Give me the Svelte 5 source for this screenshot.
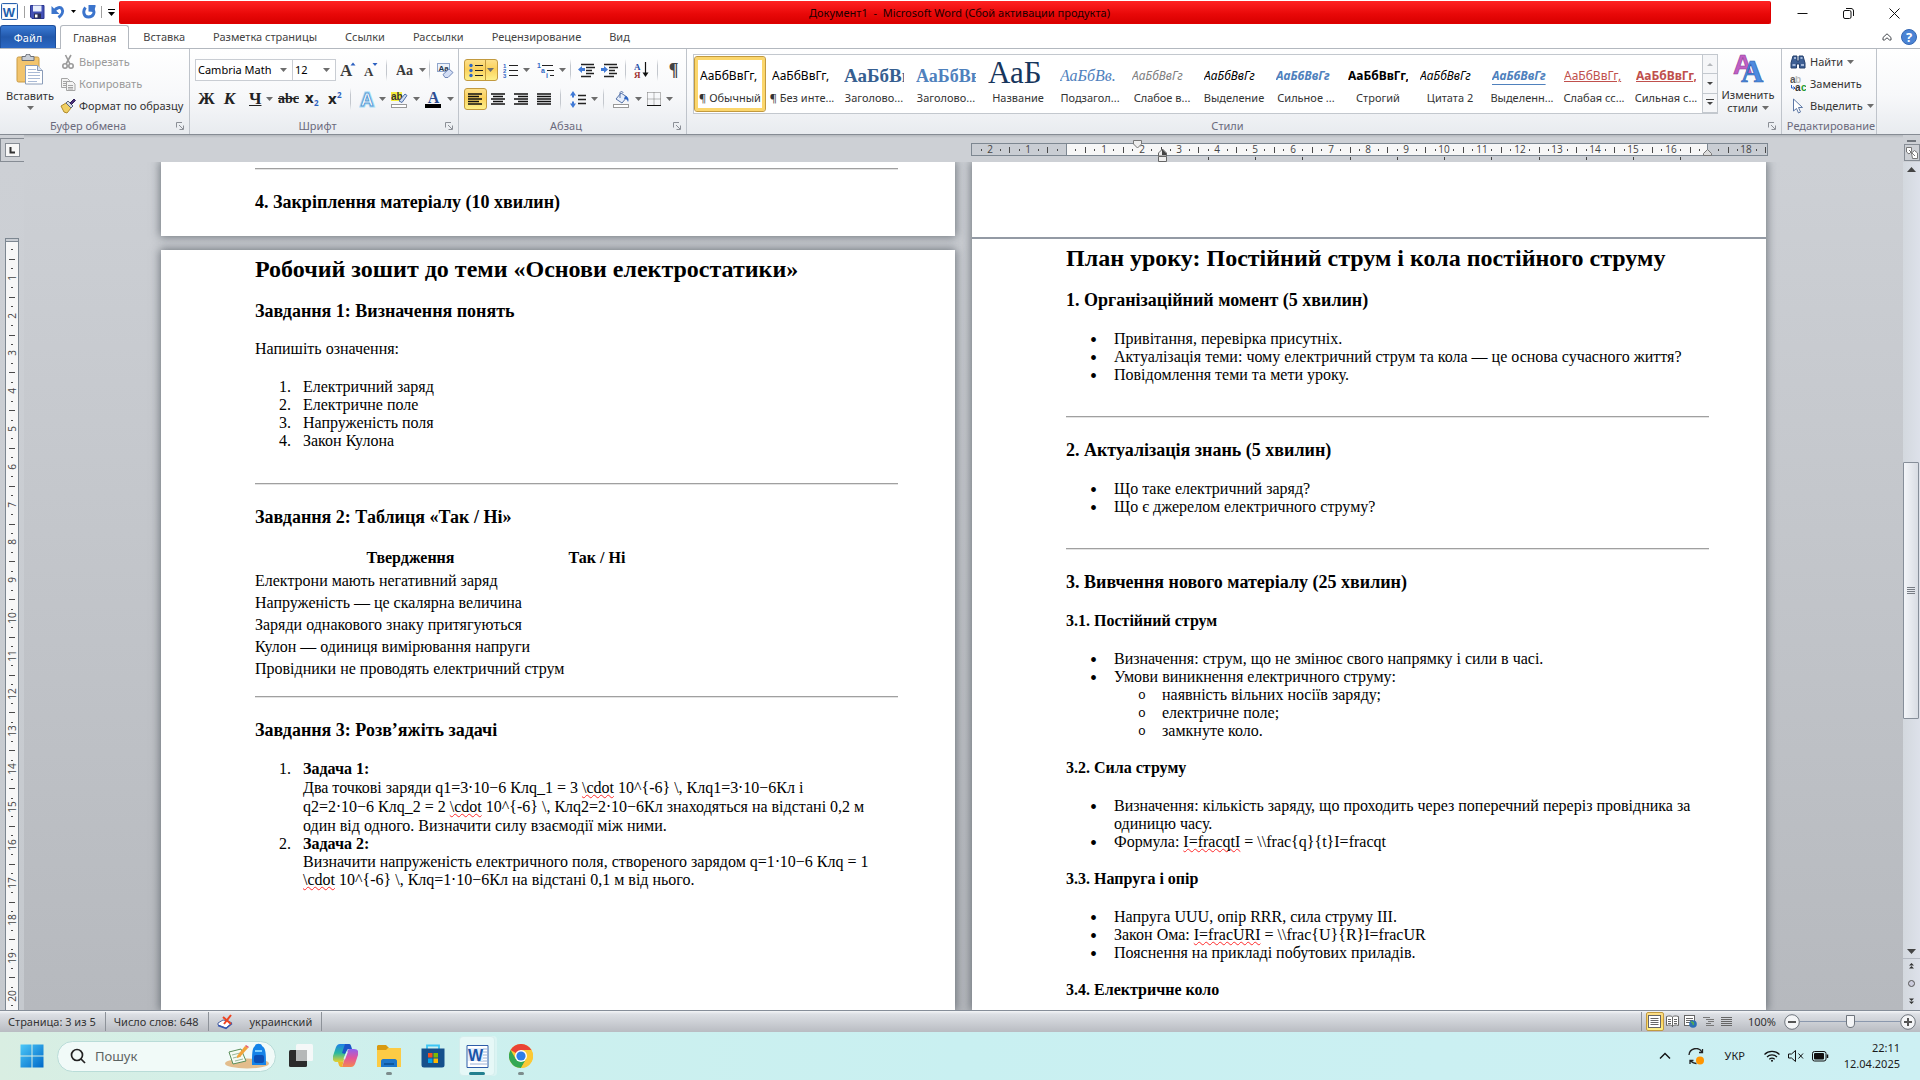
<script>
  const tabs = ['Вставка', 'Разметка страницы', 'Ссылки', 'Рассылки', 'Рецензирование', 'Вид'];
  const styles = [
    { name: '¶ Обычный', sample: 'АаБбВвГг,', kind: 'plain', on: true },
    { name: '¶ Без инте...', sample: 'АаБбВвГг,', kind: 'plain' },
    { name: 'Заголово...', sample: 'АаБбВв', kind: 'head1' },
    { name: 'Заголово...', sample: 'АаБбВв', kind: 'head2' },
    { name: 'Название', sample: 'АаБ', kind: 'title' },
    { name: 'Подзагол...', sample: 'АаБбВв.', kind: 'subtitle' },
    { name: 'Слабое в...', sample: 'АаБбВвГг', kind: 'subtle' },
    { name: 'Выделение', sample: 'АаБбВвГг', kind: 'em' },
    { name: 'Сильное ...', sample: 'АаБбВвГг', kind: 'intense' },
    { name: 'Строгий', sample: 'АаБбВвГг,', kind: 'strong' },
    { name: 'Цитата 2', sample: 'АаБбВвГг', kind: 'em' },
    { name: 'Выделенн...', sample: 'АаБбВвГг', kind: 'quote' },
    { name: 'Слабая сс...', sample: 'АаБбВвГг,', kind: 'ref' },
    { name: 'Сильная с...', sample: 'АаБбВвГг,', kind: 'refbold' }
  ];
  const statements = [
    'Електрони мають негативний заряд',
    'Напруженість — це скалярна величина',
    'Заряди однакового знаку притягуються',
    'Кулон — одиниця вимірювання напруги',
    'Провідники не проводять електричний струм'
  ];

  // Ruler geometry: one centimetre at 100% zoom
  const CM = 37.8;
  const ORIGIN = 95;
  const hNumbers = [];
  const hTicks = [];
  for (let q = -10; q <= 74; q++) {
    const x = Math.round(ORIGIN + (q * CM) / 4);
    if (x < 3 || x > 794) continue;
    const k = q / 4;
    if (q % 4 === 0) {
      if (k !== 0 && k !== 17) hNumbers.push({ x, n: Math.abs(k) });
    } else hTicks.push({ x, half: q % 2 === 0 });
  }
  const tabStops = Array.from({ length: 11 }, (_, i) => Math.round(ORIGIN + (i + 3) * CM * 1.25));
  const vNumbers = [];
  const vTicks = [];
  for (let q = 1; q <= 110; q++) {
    const y = Math.round(2 + (q * CM) / 4);
    if (q % 4 === 0) vNumbers.push({ y, n: q / 4 });
    else vTicks.push({ y, half: q % 2 === 0 });
  }
  let zoom = $state(50);
</script>

{#snippet arrow()}
  <svg class="arrow" width="7" height="4" viewBox="0 0 7 4"><path d="M0 0h7L3.5 4z" fill="#6d6d6d" /></svg>
{/snippet}

{#snippet launcher(label)}
  <button class="launcher" aria-label={label}>
    <svg width="8" height="8" viewBox="0 0 8 8" fill="none" stroke="#8b8f96"><path d="M.5 5.500V.5H6M3 3l4 4M7.500 3.500v4h-4" /></svg>
  </button>
{/snippet}

<div class="app">
  <header class="titlebar">
    <div class="quick">
      <svg width="17" height="17" viewBox="0 0 17 17"><rect x=".5" y=".5" width="16" height="16" rx="1" fill="#e9f1fb" stroke="#2b62ae" /><rect x="2" y="2" width="13" height="13" fill="#fff" /><text x="8" y="13.500" font-size="13" font-weight="bold" font-family="Liberation Sans" fill="#1f5fae" text-anchor="middle">W</text></svg>
      <i class="bar"></i>
      <button class="qbtn" aria-label="Сохранить"><svg width="15" height="15" viewBox="0 0 15 15"><path d="M.5 1.500h13.500v13H2L.5 13z" fill="#4351b5" stroke="#2b3690" /><rect x="3" y="1.500" width="8.500" height="6" fill="#e8eefb" /><rect x="4" y="9.500" width="7" height="5" fill="#2a2f55" /><rect x="5" y="10.500" width="2.500" height="3" fill="#fff" /></svg></button>
      <button class="qbtn" aria-label="Отменить"><svg width="14" height="14" viewBox="0 0 14 14" fill="none"><path d="M3 6C5.500 2.500 9.500 1.500 11 4c1.500 2.500 0 6-3.500 8.500" stroke="#3b74cc" stroke-width="3" /><path d="M.5 1v8h8z" fill="#3b74cc" /></svg></button>
      <svg width="5" height="3" viewBox="0 0 5 3"><path d="M0 0h5L2.500 3z" fill="#000" /></svg>
      <button class="qbtn" aria-label="Повторить"><svg width="14" height="14" viewBox="0 0 14 14" fill="none"><path d="M3.500 2.500C.5 6 1.500 12 6.500 12S13.500 7 10.500 4" stroke="#3b74cc" stroke-width="3" /><path d="M13.500 0v1.500L12 7 6.500 6.500V0z" fill="#3b74cc" /></svg></button>
      <i class="bar"></i>
      <svg width="7" height="8" viewBox="0 0 7 8"><path d="M0 1.500h7" stroke="#000" /><path d="M0 4h7L3.500 8z" fill="#000" /></svg>
    </div>
    <div class="caption">Документ1&nbsp; -&nbsp; Microsoft Word (Сбой активации продукта)</div>
    <div class="winbtns">
      <button aria-label="Свернуть"><svg width="11" height="11" viewBox="0 0 11 11"><path d="M.5 5.500h10" stroke="#111" /></svg></button>
      <button aria-label="Восстановить"><svg width="11" height="11" viewBox="0 0 11 11" fill="none" stroke="#111"><rect x=".5" y="2.500" width="7.500" height="8" rx="1.500" /><path d="M3 .5h5c1.500 0 2.500 1 2.500 2.500v5" /></svg></button>
      <button aria-label="Закрыть"><svg width="11" height="11" viewBox="0 0 11 11"><path d="M.5.5l10 10M10.500.5l-10 10" stroke="#111" /></svg></button>
    </div>
  </header>

  <nav class="tabs">
    <button class="file">Файл</button>
    <button class="tab active">Главная</button>
    {#each tabs as t}<button class="tab">{t}</button>{/each}
    <span class="grow"></span>
    <button class="mini" aria-label="Свернуть ленту"><svg width="10" height="8" viewBox="0 0 10 8" fill="none" stroke="#44484e"><path d="M1 4.500L5 .8l4 3.700v2.500H7.500L5 4.800 2.500 7H1z" /></svg></button>
    <button class="mini" aria-label="Справка"><svg width="16" height="16" viewBox="0 0 16 16"><circle cx="8" cy="8" r="7.500" fill="#4a83d4" stroke="#3467b3" /><text x="8" y="13" font-size="13" font-weight="bold" font-family="Open Sans" fill="#fff" text-anchor="middle">?</text></svg></button>
  </nav>

  <section class="ribbon">
    <div class="group clip">
      <div class="body">
        <button class="big">
          <svg width="28" height="31" viewBox="0 0 28 31"><rect x="1" y="3" width="22" height="25" rx="1.500" fill="#f2c46d" stroke="#c99b45" /><path d="M6 2.500h3.500a2.500 2.500 0 015 0H18v4H6z" fill="#c9ced6" stroke="#6b7079" /><path d="M9.500 11.500h12l5 5v13.500h-17z" fill="#fff" stroke="#8a9cb8" /><path d="M21.500 11.500v5h5" fill="#dbe4f2" stroke="#8a9cb8" /><path d="M12 15.500h8M12 18.500h12M12 21.500h12M12 24.500h12M12 27.500h9" stroke="#a9bad6" /></svg>
          <span>Вставить</span>{@render arrow()}
        </button>
        <div class="stack">
          <button class="small off"><svg width="16" height="16" viewBox="0 0 16 16" fill="none" stroke="#9a9a9a" stroke-width="1.600"><path d="M5.500 1l4.500 9M11 1L6 10" /><circle cx="5" cy="12" r="2.200" /><circle cx="11" cy="12" r="2.200" /></svg>Вырезать</button>
          <button class="small off"><svg width="16" height="16" viewBox="0 0 16 16" fill="#f3f3f3" stroke="#a4a4a4"><path d="M1.500 2.500h6l2 2v7h-8z" /><path d="M3 5.500h4M3 7.500h5M3 9.500h5" /><path d="M6.500 5.500h6l2.500 2.500v6.500H6.500z" /><path d="M8 9.500h5M8 11.500h5M8 13h5" /></svg>Копировать</button>
          <button class="small"><svg width="16" height="16" viewBox="0 0 16 16"><path d="M1 8l5-3 5 5-4 5-3-1z" fill="#f0cf62" stroke="#b08a2a" /><path d="M6 5l5 5 2-2-5-5z" fill="#d5dbe6" stroke="#5d6980" /><path d="M10 5l4-4 1.500 1.500-4 4z" fill="#4a2f7a" stroke="#30205a" /></svg>Формат по образцу</button>
        </div>
      </div>
      <footer><span>Буфер обмена</span>{@render launcher('Буфер обмена')}</footer>
    </div>

    <div class="group font">
      <div class="rows">
        <div class="row">
          <label class="combo name"><select aria-label="Шрифт"><option>Cambria Math</option></select>{@render arrow()}</label>
          <label class="combo size"><select aria-label="Размер шрифта"><option>12</option></select>{@render arrow()}</label>
          <button class="ib" aria-label="Увеличить размер"><svg width="16" height="16" viewBox="0 0 16 16"><text x="0" y="14" font-size="17" font-weight="bold" font-family="Liberation Serif" fill="#3a3a3a">A</text><path d="M10.500 3.500L13 .5l2.500 3z" fill="#2b5fc0" /></svg></button>
          <button class="ib" aria-label="Уменьшить размер"><svg width="16" height="16" viewBox="0 0 16 16"><text x="1" y="14" font-size="13" font-weight="bold" font-family="Liberation Serif" fill="#3a3a3a">A</text><path d="M9.500 1h5L12 4z" fill="#2b5fc0" /></svg></button>
          <i class="sep"></i>
          <button class="ib split" aria-label="Регистр"><svg width="18" height="16" viewBox="0 0 18 16"><text x="0" y="13" font-size="14" font-weight="bold" font-family="Liberation Serif" fill="#3a3a3a">Aa</text></svg>{@render arrow()}</button>
          <i class="sep"></i>
          <button class="ib" aria-label="Очистить формат"><svg width="17" height="17" viewBox="0 0 17 17"><rect x=".5" y="1.500" width="12" height="8" fill="#eef3fb" stroke="#8fa5cc" /><text x="6.500" y="9" font-size="8" font-weight="bold" font-family="Liberation Sans" fill="#24364f" text-anchor="middle">Aa</text><path d="M6 12.500l6-5.500 4 3.500-5 5H8z" fill="#d3def5" stroke="#7187b8" /></svg></button>
        </div>
        <div class="row">
          <button class="ib serif"><b>Ж</b></button>
          <button class="ib serif"><b><em>К</em></b></button>
          <button class="ib split serif"><b class="und">Ч</b>{@render arrow()}</button>
          <button class="ib serif small-letters"><b><s>abc</s></b></button>
          <button class="ib" aria-label="Подстрочный"><svg width="15" height="16" viewBox="0 0 15 16"><text x="1" y="12" font-size="15" font-weight="bold" font-family="Open Sans" fill="#222">x</text><text x="10" y="15" font-size="8" font-weight="bold" font-family="Open Sans" fill="#2b5fc0">2</text></svg></button>
          <button class="ib" aria-label="Надстрочный"><svg width="15" height="16" viewBox="0 0 15 16"><text x="1" y="13" font-size="15" font-weight="bold" font-family="Open Sans" fill="#222">x</text><text x="10" y="7" font-size="8" font-weight="bold" font-family="Open Sans" fill="#2b5fc0">2</text></svg></button>
          <i class="sep"></i>
          <button class="ib split narrow" aria-label="Текстовые эффекты"><svg width="17" height="17" viewBox="0 0 17 17"><text x="8" y="14.500" font-size="18" font-family="Liberation Sans" font-weight="bold" fill="#fff" stroke="#a7dcf6" stroke-width="3" text-anchor="middle">A</text><text x="8" y="14.500" font-size="18" font-family="Liberation Sans" font-weight="bold" fill="#fff" stroke="#5b9bd5" stroke-width="1" text-anchor="middle">A</text></svg>{@render arrow()}</button>
          <button class="ib split" aria-label="Цвет выделения"><svg width="17" height="17" viewBox="0 0 17 17"><rect x="0" y="1" width="11" height="9" fill="#f5ee3c" /><text x="0" y="9" font-size="10" font-weight="bold" font-family="Liberation Sans" fill="#333">ab</text><path d="M8 10l6-7 2 1.500-5 7z" fill="#cfdcf2" stroke="#4c6ea8" /><rect x=".5" y="13.500" width="15" height="3" fill="#fff" stroke="#999" /></svg>{@render arrow()}</button>
          <button class="ib split" aria-label="Цвет текста"><svg width="17" height="17" viewBox="0 0 17 17"><text x="8.500" y="12" font-size="16" font-weight="bold" font-family="Liberation Serif" fill="#2c4d92" text-anchor="middle">A</text><rect x="0" y="13" width="16" height="4" fill="#000" /></svg>{@render arrow()}</button>
        </div>
      </div>
      <footer><span>Шрифт</span>{@render launcher('Шрифт')}</footer>
    </div>

    <div class="group para">
      <div class="rows">
        <div class="row">
          <button class="ib split on" aria-label="Маркеры"><svg width="15" height="15" viewBox="0 0 15 15"><g fill="#2f66c4"><circle cx="2" cy="2.500" r="1.700" /><circle cx="2" cy="7.500" r="1.700" /><circle cx="2" cy="12.500" r="1.700" /></g><path d="M6 2.500h8M6 7.500h8M6 12.500h8" stroke="#222" /></svg><i class="divide"></i>{@render arrow()}</button>
          <button class="ib split" aria-label="Нумерация"><svg width="15" height="15" viewBox="0 0 15 15"><g font-size="6" font-weight="bold" font-family="Liberation Sans" fill="#2f66c4"><text x="0" y="4.500">1</text><text x="0" y="9.500">2</text><text x="0" y="14.500">3</text></g><path d="M6 2.500h9M6 7.500h9M6 12.500h9" stroke="#222" /></svg>{@render arrow()}</button>
          <button class="ib split" aria-label="Многоуровневый список"><svg width="17" height="15" viewBox="0 0 17 15"><g font-size="7" font-weight="bold" font-family="Liberation Sans" fill="#2f66c4"><text x="0" y="5">1</text><text x="4" y="9.500">a</text><text x="9" y="15">i</text></g><path d="M5 2.500h11M10 7.500h7M13 12.500h4" stroke="#222" /></svg>{@render arrow()}</button>
          <i class="sep"></i>
          <button class="ib" aria-label="Уменьшить отступ"><svg width="17" height="15" viewBox="0 0 17 15"><path d="M3 1.500h13M8 4.500h9M8 7.500h6M8 10.500h8M3 13.500h10" stroke="#222" stroke-width="1.500" /><path d="M0 6.500L4 3v2h3v3H4v2z" fill="#3f79d6" /></svg></button>
          <button class="ib" aria-label="Увеличить отступ"><svg width="17" height="15" viewBox="0 0 17 15"><path d="M3 1.500h13M8 4.500h9M8 7.500h6M8 10.500h8M3 13.500h10" stroke="#222" stroke-width="1.500" /><path d="M7 6.500L3 3v2H0v3h3v2z" fill="#3f79d6" /></svg></button>
          <i class="sep"></i>
          <button class="ib" aria-label="Сортировка"><svg width="15" height="16" viewBox="0 0 15 16"><text x="0" y="7.500" font-size="9" font-weight="bold" font-family="Liberation Serif" fill="#1f4fa8">А</text><text x="0" y="15.500" font-size="9" font-weight="bold" font-family="Liberation Serif" fill="#a03030">Я</text><path d="M11.500 0v13" stroke="#111" stroke-width="1.200" /><path d="M8.500 10.500h6l-3 4.500z" fill="#111" /></svg></button>
          <i class="sep"></i>
          <button class="ib mark">¶</button>
        </div>
        <div class="row">
          <button class="ib on" aria-label="По левому краю"><svg width="15" height="13" viewBox="0 0 15 13"><path d="M0 1h14M0 3.500h11M0 6h14M0 8.500h11M0 11h14" stroke="#111" stroke-width="1.400" /></svg></button>
          <button class="ib" aria-label="По центру"><svg width="15" height="13" viewBox="0 0 15 13"><path d="M0 1h14M2 3.500h10M0 6h14M2 8.500h10M0 11h14" stroke="#111" stroke-width="1.400" /></svg></button>
          <button class="ib" aria-label="По правому краю"><svg width="15" height="13" viewBox="0 0 15 13"><path d="M0 1h14M4 3.500h10M0 6h14M4 8.500h10M0 11h14" stroke="#111" stroke-width="1.400" /></svg></button>
          <button class="ib" aria-label="По ширине"><svg width="15" height="13" viewBox="0 0 15 13"><path d="M0 1h14M0 3.500h14M0 6h14M0 8.500h14M0 11h14" stroke="#111" stroke-width="1.400" /></svg></button>
          <i class="sep"></i>
          <button class="ib split" aria-label="Интервал"><svg width="16" height="17" viewBox="0 0 16 17"><path d="M3 0l3 4.500H4v2H2v-2H0zM3 17l3-4.500H4v-2H2v2H0z" fill="#3f79d6" /><path d="M8 4.500h8M8 8.500h8M8 12.500h8" stroke="#222" stroke-width="1.300" /></svg>{@render arrow()}</button>
          <i class="sep"></i>
          <button class="ib split" aria-label="Заливка"><svg width="17" height="17" viewBox="0 0 17 17"><path d="M3 8l5-6 6 4-5 6z" fill="#e6eefb" stroke="#5673a8" /><path d="M7 7V2c0-2 3-2 3 0" fill="none" stroke="#5673a8" /><path d="M12 5c4 1 4 4 3 6-1-3-2-3-4-3z" fill="#2f66c4" /><rect x=".5" y="13.500" width="15" height="3" fill="#fff" stroke="#999" /></svg>{@render arrow()}</button>
          <button class="ib split" aria-label="Границы"><svg width="14" height="14" viewBox="0 0 14 14" fill="none"><path d="M.5.5h13v13M.5.5v13M7 .5v13M.5 7h13" stroke="#777" stroke-dasharray="1 1" /><path d="M0 13.500h14" stroke="#111" /></svg>{@render arrow()}</button>
        </div>
      </div>
      <footer><span>Абзац</span>{@render launcher('Абзац')}</footer>
    </div>

    <div class="group gallery-group">
      <div class="body">
        <div class="gallery">
          {#each styles as s}
            <button class="tile" class:on={s.on}>
              <span class="sample {s.kind}">{s.sample}</span>
              <span class="tname">{s.name}</span>
            </button>
          {/each}
          <div class="gscroll">
            <button aria-label="Вверх"><svg width="6" height="3" viewBox="0 0 6 3"><path d="M0 3h6L3 0z" fill="#b5b8bc" /></svg></button>
            <button aria-label="Вниз"><svg width="6" height="3" viewBox="0 0 6 3"><path d="M0 0h6L3 3z" fill="#444" /></svg></button>
            <button aria-label="Все стили"><svg width="8" height="7" viewBox="0 0 8 7"><path d="M0 .5h8" stroke="#444" /><path d="M1 3h6L4 6z" fill="#444" /></svg></button>
          </div>
        </div>
        <button class="big change">
          <svg width="31" height="30" viewBox="0 0 31 30"><text x="0" y="20" font-size="27" font-family="Liberation Sans" font-weight="bold" fill="#c15fc4" stroke="#8d3c96" stroke-width=".6">A</text><text x="8" y="28" font-size="31" font-family="Liberation Serif" font-weight="bold" fill="#4d8be0" stroke="#2a5caa" stroke-width=".6">A</text></svg>
          <span>Изменить</span><span class="with">стили {@render arrow()}</span>
        </button>
      </div>
      <footer><span>Стили</span>{@render launcher('Стили')}</footer>
    </div>

    <div class="group edit">
      <div class="stack">
        <button class="small"><svg width="16" height="16" viewBox="0 0 16 16"><path d="M3 2h4v5h2V2h4l2 7v5H9.500v-4h-3v4H1V9z" fill="#3d5f94" stroke="#25406d" /><path d="M2.500 11h3M11 11h3M4 4h2M10.500 4h2" stroke="#c4d4ee" stroke-width="1.500" /></svg>Найти {@render arrow()}</button>
        <button class="small"><svg width="16" height="16" viewBox="0 0 16 16"><g font-size="10" font-weight="bold" font-family="Liberation Sans"><text x="0" y="7" fill="#555">a</text><text x="5" y="7" fill="#bbb">b</text><text x="5" y="15" fill="#333">a</text><text x="11" y="15" fill="#1d9a2c">c</text></g><path d="M1.500 9v3H5M3.500 10.500L5 12l-1.500 1.500" fill="none" stroke="#2b5fc0" /></svg>Заменить</button>
        <button class="small"><svg width="16" height="16" viewBox="0 0 16 16"><path d="M3.500 1v12l3-2.500 2 4.500 2-1-2-4.500h4z" fill="#fff" stroke="#5d78a6" /></svg>Выделить {@render arrow()}</button>
      </div>
      <footer><span>Редактирование</span></footer>
    </div>
  </section>

  <main class="work">
    <div class="corner"><button class="tabsel" aria-label="Табуляция"><svg width="7" height="7" viewBox="0 0 7 7"><path d="M1.500 0v5.500H6" fill="none" stroke="#333" stroke-width="2" /></svg></button></div>
    <div class="hrow">
      <span class="page-slot"></span>
      <span class="ruler-slot">
        <svg class="hruler" width="798" height="27" viewBox="0 0 798 27">
          <rect x=".5" y="8.500" width="796" height="12" fill="#c9cdd3" stroke="#7d8791" />
          <rect x="95.500" y="9" width="641" height="11" fill="#f7f7f7" />
          <path d="M95.500 9v11M736.500 9v11" stroke="#7d8791" />
          {#each hTicks as t}<rect x={t.x} y={t.half ? 12 : 14} width="1" height={t.half ? 6 : 2} fill="#4a4a4a" />{/each}
          {#each hNumbers as t}<text x={t.x} y="18" font-size="10" font-family="Open Sans" fill="#444" text-anchor="middle">{t.n}</text>{/each}
          {#each tabStops as x}<rect {x} y="22" width="1" height="3" fill="#444" />{/each}
          <path d="M162.500 5.500h8v3.500l-4 4-4-4z" fill="#eee" stroke="#777" />
          <path d="M187.500 21.500h8v5h-8zM187.500 21v-3l4-4 4 4v3z" fill="#eee" stroke="#666" />
          <path d="M191 14l4 4v2h-4z" fill="#444" />
          <path d="M732.500 20.500v-2l4-4 4 4v2z" fill="#ddd" stroke="#777" />
        </svg>
      </span>
    </div>
    <div class="rtoggle"><i></i><button aria-label="Линейка"><svg width="12" height="12" viewBox="0 0 12 12" fill="#fff" stroke="#777"><path d="M.5.500h5v4l-2.500 2.500L.5 5zM5.500 6l3-2.500L11.500 6v5.500h-5z" /><path d="M3 3l6 6" /></svg></button></div>

    <div class="vcol">
      <svg class="vruler" width="14" height="1040" viewBox="0 0 14 1040">
        <rect x=".5" y=".5" width="13" height="1039" fill="#f7f7f7" stroke="#7d8791" />
        <rect x="1" y="1" width="12" height="2" fill="#c9cdd3" /><path d="M1 3.500h12" stroke="#7d8791" />
        {#each vTicks as t}<rect x={t.half ? 4 : 6} y={t.y} width={t.half ? 6 : 2} height="1" fill="#4a4a4a" />{/each}
        {#each vNumbers as t}<text transform="translate(11 {t.y}) rotate(-90)" font-size="10" font-family="Open Sans" fill="#444" text-anchor="middle">{t.n}</text>{/each}
      </svg>
    </div>

    <div class="canvas">
      <div class="column">
        <article class="page stub">
          <hr />
          <h2>4. Закріплення матеріалу (10 хвилин)</h2>
        </article>
        <article class="page first">
          <h1>Робочий зошит до теми «Основи електростатики»</h1>
          <h2>Завдання 1: Визначення понять</h2>
          <p>Напишіть означення:</p>
          <ol>
            <li>Електричний заряд</li>
            <li>Електричне поле</li>
            <li>Напруженість поля</li>
            <li>Закон Кулона</li>
          </ol>
          <hr />
          <h2>Завдання 2: Таблиця «Так / Ні»</h2>
          <table>
            <thead><tr><th class="wide">Твердження</th><th class="yes">Так / Ні</th></tr></thead>
            <tbody>{#each statements as s}<tr><td>{s}</td><td></td></tr>{/each}</tbody>
          </table>
          <hr />
          <h2>Завдання 3: Розв’яжіть задачі</h2>
          <ol class="tasks">
            <li><b>Задача 1:</b><br />Два точкові заряди q1=3⋅10−6 Клq_1 = 3 <u>\cdot</u> 10^{'{'}-6{'}'} \, Клq1=3⋅10−6Кл і<br />q2=2⋅10−6 Клq_2 = 2 <u>\cdot</u> 10^{'{'}-6{'}'} \, Клq2=2⋅10−6Кл знаходяться на відстані 0,2 м<br />один від одного. Визначити силу взаємодії між ними.</li>
            <li><b>Задача 2:</b><br />Визначити напруженість електричного поля, створеного зарядом q=1⋅10−6 Клq = 1<br /><u>\cdot</u> 10^{'{'}-6{'}'} \, Клq=1⋅10−6Кл на відстані 0,1 м від нього.</li>
          </ol>
        </article>
      </div>

      <div class="column right">
        <article class="page blank"></article>
        <article class="page second">
          <h1>План уроку: Постійний струм і кола постійного струму</h1>
          <h2>1. Організаційний момент (5 хвилин)</h2>
          <ul class="before-rule">
            <li>Привітання, перевірка присутніх.</li>
            <li>Актуалізація теми: чому електричний струм та кола — це основа сучасного життя?</li>
            <li>Повідомлення теми та мети уроку.</li>
          </ul>
          <hr />
          <h2>2. Актуалізація знань (5 хвилин)</h2>
          <ul class="before-rule">
            <li>Що таке електричний заряд?</li>
            <li>Що є джерелом електричного струму?</li>
          </ul>
          <hr />
          <h2>3. Вивчення нового матеріалу (25 хвилин)</h2>
          <h3>3.1. Постійний струм</h3>
          <ul>
            <li>Визначення: струм, що не змінює свого напрямку і сили в часі.</li>
            <li>Умови виникнення електричного струму:
              <ul class="inner">
                <li>наявність вільних носіїв заряду;</li>
                <li>електричне поле;</li>
                <li>замкнуте коло.</li>
              </ul>
            </li>
          </ul>
          <h3>3.2. Сила струму</h3>
          <ul>
            <li>Визначення: кількість заряду, що проходить через поперечний переріз провідника за одиницю часу.</li>
            <li>Формула: <u>I=fracqtI</u> = \\frac{'{'}q{'}'}{'{'}t{'}'}I=fracqt</li>
          </ul>
          <h3>3.3. Напруга і опір</h3>
          <ul>
            <li>Напруга UUU, опір RRR, сила струму III.</li>
            <li>Закон Ома: <u>I=fracURI</u> = \\frac{'{'}U{'}'}{'{'}R{'}'}I=fracUR</li>
            <li>Пояснення на прикладі побутових приладів.</li>
          </ul>
          <h3>3.4. Електричне коло</h3>
        </article>
      </div>
    </div>

    <div class="vscroll">
      <button aria-label="Прокрутить вверх"><svg width="9" height="5" viewBox="0 0 9 5"><path d="M0 5h9L4.500 0z" fill="#444" /></svg></button>
      <span class="above"></span>
      <span class="thumb"><svg width="8" height="7" viewBox="0 0 8 7"><path d="M0 .5h8M0 2.500h8M0 4.500h8M0 6.500h8" stroke="#777c84" /></svg></span>
      <span class="below"></span>
      <button aria-label="Прокрутить вниз"><svg width="9" height="5" viewBox="0 0 9 5"><path d="M0 0h9L4.500 5z" fill="#444" /></svg></button>
      <div class="browse">
        <button aria-label="Предыдущая страница"><svg width="5" height="6" viewBox="0 0 5 6"><path d="M0 2.500h5L2.500 0zM0 5.500h5L2.500 3z" fill="#333" /></svg></button>
        <button aria-label="Выбор объекта"><svg width="7" height="7" viewBox="0 0 7 7"><circle cx="3.500" cy="3.500" r="3" fill="#ccd" stroke="#555" /></svg></button>
        <button aria-label="Следующая страница"><svg width="5" height="6" viewBox="0 0 5 6"><path d="M0 .5h5L2.500 3zM0 3.500h5L2.500 6z" fill="#333" /></svg></button>
      </div>
    </div>
  </main>

  <footer class="status">
    <button>Страница: 3 из 5</button>
    <button>Число слов: 648</button>
    <button class="lang"><svg width="17" height="16" viewBox="0 0 17 16"><path d="M1 9l5-3 5 1 4 2-6 5-8-3z" fill="#fff" stroke="#4d63a0" /><path d="M1 11.500l8 3 6-5" fill="none" stroke="#3556b0" stroke-width="1.500" /><path d="M6 3l8 7M14 1L7 10" stroke="#ee4422" stroke-width="2" /></svg><span>украинский</span></button>
    <span class="grow"></span>
    <div class="views">
      <button class="on" aria-label="Разметка страницы"><svg width="13" height="13" viewBox="0 0 13 13"><rect x=".5" y=".5" width="12" height="12" fill="#fff" stroke="#666" /><path d="M2.500 3.500h8M2.500 5.500h8M2.500 7.500h8M2.500 9.500h8" stroke="#666" /></svg></button>
      <button aria-label="Режим чтения"><svg width="13" height="13" viewBox="0 0 13 13" fill="#fff" stroke="#666"><path d="M.5 1.500c3-1 5-.5 6 .5 1-1 3-1.500 6-.5v9c-3-1-5-.5-6 1-1-1.500-3-2-6-1zM6.500 2v10M2 4.500h3M2 6.500h3M2 8.500h3M8 4.500h3M8 6.500h3M8 8.500h3" /></svg></button>
      <button aria-label="Веб-документ"><svg width="13" height="13" viewBox="0 0 13 13"><rect x=".5" y=".5" width="10" height="10" fill="#fff" stroke="#666" /><path d="M2 3.500h7M2 5.500h7M2 7.500h4" stroke="#666" /><circle cx="9" cy="9" r="3.800" fill="#2c6fb5" /><path d="M7 7c2 0 3 1 2 3" stroke="#55b04b" stroke-width="1.500" fill="none" /></svg></button>
      <button aria-label="Структура"><svg width="11" height="11" viewBox="0 0 11 11"><path d="M0 1.500h7M3 3.500h8M5 5.500h6M3 7.500h5M3 9.500h8" stroke="#777" /></svg></button>
      <button aria-label="Черновик"><svg width="11" height="11" viewBox="0 0 11 11"><path d="M0 1.500h11M0 3.500h11M0 5.500h11M0 7.500h11M0 9.500h11" stroke="#666" /></svg></button>
    </div>
    <button class="pct">100%</button>
    <button class="round" aria-label="Уменьшить"><svg width="16" height="16" viewBox="0 0 16 16"><circle cx="8" cy="8" r="7.300" fill="#f4f5f7" stroke="#6f757d" /><path d="M4 8h8" stroke="#555" stroke-width="2" /></svg></button>
    <input class="zoom" type="range" min="0" max="100" bind:value={zoom} aria-label="Масштаб" />
    <button class="round" aria-label="Увеличить"><svg width="16" height="16" viewBox="0 0 16 16"><circle cx="8" cy="8" r="7.300" fill="#f4f5f7" stroke="#6f757d" /><path d="M4 8h8M8 4v8" stroke="#555" stroke-width="2" /></svg></button>
  </footer>

  <footer class="taskbar">
    <button class="start" aria-label="Пуск"><svg width="24" height="24" viewBox="0 0 24 24"><defs><linearGradient id="win" x1="0" y1="0" x2="1" y2="1"><stop offset="0" stop-color="#4cc8f8" /><stop offset="1" stop-color="#0069c9" /></linearGradient></defs><path d="M.5.5h11v11H.5zM12.500.5h11v11h-11zM.5 12.500h11v11H.5zM12.500 12.500h11v11h-11z" fill="url(#win)" /></svg></button>
    <label class="search">
      <svg width="16" height="16" viewBox="0 0 16 16" fill="none" stroke="#222" stroke-width="1.700"><circle cx="7" cy="7" r="5.500" /><path d="M11 11l4 4" /></svg>
      <input type="text" placeholder="Пошук" aria-label="Пошук" />
      <svg width="44" height="26" viewBox="0 0 44 26"><ellipse cx="22" cy="20.500" rx="22" ry="5" fill="#e3bd8d" /><path d="M4 9l12-3 5 12-13 3z" fill="#f5faf3" stroke="#5b8f5b" /><path d="M7 12l8-2M8 15l8-2M10 18l8-2" stroke="#9ab89a" /><path d="M12 13L20 3l3 2-8 9-3 1z" fill="#f2a33a" /><path d="M20 3l1-1 3 2-1 1z" fill="#e8556a" /><path d="M30 3c0-3 7-3 7 0 4 2 4 8 4 19H27C27 11 27 5 30 3z" fill="#1583e8" /><rect x="29" y="12" width="10" height="8" rx="2" fill="#0b4fb5" /><path d="M30 8h7" stroke="#7fd0ff" stroke-width="2" /></svg>
    </label>
    <button class="task" aria-label="Представление задач"><svg width="24" height="24" viewBox="0 0 24 24"><rect x="7" y="0" width="17" height="17" rx="1.500" fill="#f5f8f8" /><rect x="0" y="6" width="18" height="17" rx="1.500" fill="#2b2b2b" /><rect x="7" y="6" width="11" height="11" fill="#b5b8b8" /></svg></button>
    <button class="task" aria-label="Copilot"><svg width="25" height="24" viewBox="0 0 25 24"><defs><linearGradient id="c1" x1="0" y1="0" x2="0" y2="1"><stop offset="0" stop-color="#1e7fe8" /><stop offset=".5" stop-color="#28b9a0" /><stop offset="1" stop-color="#e6d22e" /></linearGradient><linearGradient id="c2" x1="0" y1="0" x2="0" y2="1"><stop offset="0" stop-color="#8e62f0" /><stop offset=".5" stop-color="#e3559a" /><stop offset="1" stop-color="#f5874e" /></linearGradient></defs><path d="M7 0h9l-5 15c-1 3-2 3-4 3H4c-4 0-5-3-4-6L3 3c1-2 2-3 4-3z" fill="url(#c1)" /><path d="M18 23H9l5-15c1-3 2-3 4-3h3c4 0 5 3 4 6l-3 9c-1 2-2 3-4 3z" fill="url(#c2)" /><path d="M12 0h4c2 0 2 2 3 5h-3c-2 0-2 1-3 3l-1 2-3-1z" fill="#1a55c9" /><path d="M11 16l-2 7c-3 0-3-2-4-5h3c1 0 2-1 3-2z" fill="#f0b52c" /><path d="M10.500 14.500l3-7h1.500l-3 8z" fill="#d8f4f3" /></svg></button>
    <button class="task" aria-label="Проводник"><svg width="25" height="24" viewBox="0 0 25 24"><path d="M1 1h8l3 3v3H0V2z" fill="#d99a10" /><path d="M0 6h9l2-2h13v19H0z" fill="#fccb45" /><path d="M4 17c0-1 1-2 2-2h12c1 0 2 1 2 2v6H4z" fill="#1d76c9" /><path d="M7 19h10v2H7z" fill="#0e579e" /></svg><i class="dot"></i></button>
    <button class="task" aria-label="Microsoft Store"><svg width="24" height="24" viewBox="0 0 24 24"><path d="M6 5V1.500h12V5" fill="none" stroke="#3cc6f5" stroke-width="1.800" /><path d="M.5 4.500h23V21q0 2.500-2.500 2.500H3Q.5 23.500.5 21z" fill="#15508c" /><path d="M7 9h4.500v4.500H7z" fill="#f25022" /><path d="M12.500 9H17v4.500h-4.500z" fill="#7fba00" /><path d="M7 14.500h4.500V19H7z" fill="#00a4ef" /><path d="M12.500 14.500H17V19h-4.500z" fill="#ffb900" /></svg></button>
    <button class="task current" aria-label="Word"><svg width="23" height="23" viewBox="0 0 23 23"><path d="M1 .5h21v22H1z" fill="#fff" stroke="#2d5ca8" /><path d="M12 4h9M12 7h9M12 10h9M12 13h9M12 16h9M4 19h17" stroke="#9ab0d5" /><path d="M2 3h15v13H2z" fill="#e3edfb" /><text x="9.500" y="15.500" font-size="16" font-weight="bold" font-family="Liberation Sans" fill="#1a54a8" text-anchor="middle">W</text></svg><i class="pill"></i></button>
    <button class="task" aria-label="Chrome"><svg width="24" height="24" viewBox="0 0 24 24"><circle cx="12" cy="12" r="12" fill="#fcc934" /><path d="M12 12L1.600 6A12 12 0 0122.400 6z" fill="#ea4335" /><path d="M1.600 6A12 12 0 0012 24l5.200-9L12 12 6.800 15z" fill="#34a853" /><path d="M12 6h10.400A12 12 0 0112 24l5.200-9z" fill="#fcc934" /><circle cx="12" cy="12" r="6" fill="#fff" /><circle cx="12" cy="12" r="4.600" fill="#2f7de9" /></svg><i class="dot"></i></button>
    <span class="grow"></span>
    <button class="tray" aria-label="Скрытые значки"><svg width="12" height="8" viewBox="0 0 12 8"><path d="M1 6.500l5-5 5 5" fill="none" stroke="#111" stroke-width="1.400" /></svg></button>
    <button class="tray" aria-label="Обновление"><svg width="17" height="17" viewBox="0 0 17 17" fill="none" stroke="#222" stroke-width="1.300"><path d="M1 7a7 7 0 0113-3M14.500 1v3.500H11M2 16v-3.500h3.500M2.500 12.500a7 7 0 006 3" /><circle cx="12" cy="12.500" r="4" fill="#ff9500" stroke="none" /></svg></button>
    <button class="kbd">УКР</button>
    <button class="net" aria-label="Сеть, звук, батарея">
      <svg width="16" height="12" viewBox="0 0 16 12" fill="none" stroke="#111" stroke-width="1.200"><path d="M.5 4.500a10.500 10.500 0 0115 0M3 7a7 7 0 0110 0M5.300 9.300a4 4 0 015.400 0" /><circle cx="8" cy="10.800" r="1" fill="#111" stroke="none" /></svg>
      <svg width="16" height="12" viewBox="0 0 16 12" fill="none" stroke="#111"><path d="M.5 4h3l4-3.500v11L3.500 8h-3zM10.500 3.500l4.500 5M15 3.500l-4.500 5" /></svg>
      <svg width="17" height="11" viewBox="0 0 17 11"><rect x=".5" y=".5" width="13.500" height="9.500" rx="2" fill="none" stroke="#111" /><rect x="2" y="2" width="10" height="6.500" rx="1" fill="#111" /><path d="M15.500 3.500v3.500" stroke="#111" stroke-width="1.500" /></svg>
    </button>
    <div class="clock"><time>22:11</time><time>12.04.2025</time></div>
  </footer>
</div>

<style>
  :global(body) { overflow: hidden; }
  * { box-sizing: border-box; }
  button { font: inherit; color: inherit; background: none; border: 0; padding: 0; margin: 0; }
  svg { display: block; flex: none; }
  .app { height: 100vh; display: flex; flex-direction: column; font: 11px/16px "Noto Sans", "Open Sans", sans-serif; color: #3b3b3b; background: #fff; }
  .grow { flex: 1; }

  .titlebar { display: flex; height: 25px; flex: none; padding-top: 1px; }
  .quick { width: 119px; flex: none; display: flex; align-items: center; justify-content: space-between; padding: 0 4px 3px 1px; }
  .quick .bar { width: 1px; height: 12px; background: #a0a0a0; }
  .qbtn { display: flex; }
  .caption { flex: 1; height: 23px; line-height: 24px; padding-left: 29px; text-align: center; color: #1c0000; background: linear-gradient(#ff2222, #e80808 60%, #d90000); border: 1px solid #e00000; border-width: 0 1px 1px; border-radius: 2px; }
  .winbtns { display: flex; width: 149px; flex: none; padding-left: 8px; }
  .winbtns button { width: 46px; display: flex; justify-content: center; align-items: center; }

  .tabs { display: flex; height: 24px; flex: none; border-bottom: 1px solid #b3b8bf; line-height: 23px; color: #444; }
  .tabs .file { width: 56px; margin-right: 4px; color: #fff; background: linear-gradient(#3a7bd5, #2258ab 50%, #2b68c4); border: 1px solid #1d4f9c; border-bottom: 0; border-radius: 3px 3px 0 0; line-height: 21px; }
  .tab { padding: 0 14px; }
  .tab.active { position: relative; border: 1px solid #b3b8bf; border-bottom: 0; border-radius: 3px 3px 0 0; padding: 0 12px; background: #fff; height: 24px; line-height: 21px; }
  .mini { display: flex; align-items: center; margin-right: 3px; }
  .mini + .mini { margin-left: 6px; }

  .ribbon { display: flex; height: 86px; flex: none; background: linear-gradient(#fff, #f7f8fa 55%, #e8ebef); border-bottom: 1px solid #868c94; }
  .group { display: flex; flex-direction: column; border-right: 1px solid #bfc4cb; flex: none; }
  .group footer { height: 17px; margin-top: auto; display: flex; align-items: center; color: #6a6a7c; padding-right: 5px; }
  .group footer span { flex: 1; text-align: center; white-space: nowrap; }
  .launcher { display: flex; }
  .clip { width: 190px; }
  .font { width: 269px; }
  .para { width: 228px; }
  .gallery-group { flex: 1; min-width: 0; }
  .edit { width: 95px; margin-right: 43px; padding-left: 4px; }
  .edit footer { padding: 0; }
  .body { display: flex; }
  .big { display: flex; flex-direction: column; align-items: center; width: 60px; flex: none; padding-top: 5px; color: #333; }
  .big span { margin-top: 3px; margin-bottom: 2px; }
  .big span.with { display: flex; align-items: center; gap: 4px; margin: -5px 0 0; }
  .stack { display: flex; flex-direction: column; padding-top: 2px; color: #333; }
  .small { height: 22px; display: flex; align-items: center; gap: 3px; white-space: nowrap; }
  .small.off { color: #9a9a9a; }
  .edit .small { padding-left: 4px; gap: 4px; }
  .rows { display: flex; flex-direction: column; gap: 7px; padding: 10px 0 0 5px; }
  .row { display: flex; height: 22px; align-items: stretch; }
  .combo { display: flex; align-items: center; border: 1px solid #c9cdd3; background: #fff; padding-right: 5px; color: #000; height: 22px; }
  .combo select { appearance: none; flex: 1; min-width: 0; border: 0; background: none; font: inherit; color: inherit; padding: 0 0 0 2px; }
  .combo.name { width: 98px; }
  .combo.size { width: 43px; border-left: 0; }
  .ib { width: 23px; display: flex; align-items: center; justify-content: center; border: 1px solid transparent; border-radius: 3px; }
  .ib.split { width: 34px; gap: 5px; justify-content: space-between; padding: 0 3px 0 4px; }
  .ib.split.narrow { width: 31px; padding-left: 3px; gap: 3px; }
  .ib.on { background: linear-gradient(#fde08a, #fbd15b 45%, #fdf08a); border-color: #c29a3f; }
  .ib .divide { width: 1px; align-self: stretch; background: #c29a3f; }
  .ib.on.split { padding: 0 3px 0 4px; gap: 1px; }
  .ib.serif { font: 17px/20px "Liberation Serif", serif; color: #222; }
  .ib.serif.small-letters { font-size: 14px; }
  .ib.serif.split { width: 36px; padding: 0 5px 0 7px; }
  .und { text-decoration: underline; }
  .ib.mark { font: bold 18px/20px "Liberation Serif", serif; color: #444; }
  .sep { width: 9px; flex: none; background: linear-gradient(transparent, #c3c7cd 30%, #c3c7cd 70%, transparent) center / 1px 100% no-repeat; }

  .gallery { flex: 1; min-width: 0; display: flex; margin: 5px 0 0 6px; height: 60px; border: 1px solid #c3c8ce; background: #fff; overflow: hidden; }
  .gallery-group .body { padding-right: 3px; }
  .tile { width: 72px; flex: none; display: flex; flex-direction: column; align-items: center; margin: 1px 0; padding: 4px 3px 0; border-radius: 3px; color: #333; }
  .tile.on { border: 1px solid #c29a3f; padding: 3px 2px 0; background: #fff; box-shadow: inset 0 0 0 3px #fbd66c; }
  .sample { width: 60px; height: 28px; line-height: 32px; font-size: 12px; overflow: hidden; white-space: nowrap; color: #000; text-align: left; }
  .tname { line-height: 16px; white-space: nowrap; padding-top: 2px; }
  .head1, .head2 { font-family: "Liberation Serif", serif; font-weight: bold; color: #365f91; font-size: 19px; }
  .head2 { color: #4f81bd; font-size: 18px; }
  .title { font-family: "Liberation Serif", serif; color: #17365d; font-size: 31px; line-height: 26px; }
  .subtitle { font-family: "Liberation Serif", serif; font-style: italic; color: #4f81bd; font-size: 16px; }
  .subtle { font-style: italic; color: #808080; }
  .em { font-style: italic; }
  .intense { font-style: italic; font-weight: bold; color: #4f81bd; }
  .strong { font-weight: bold; }
  .quote { font-style: italic; font-weight: bold; color: #4f81bd; text-decoration: underline; text-underline-offset: 4px; }
  .ref, .refbold { color: #c0504d; text-decoration: underline; font-variant-caps: small-caps; }
  .refbold { font-weight: bold; }
  .gscroll { margin-left: auto; width: 15px; flex: none; display: flex; flex-direction: column; border-left: 1px solid #c3c8ce; }
  .gscroll button { flex: 1; display: flex; align-items: center; justify-content: center; background: #f5f6f8; border-bottom: 1px solid #c3c8ce; }

  .work { flex: 1; min-height: 0; display: grid; grid-template: 27px minmax(0, 1fr) / 24px minmax(0, 1fr) 17px; background: #cdd0d5; }
  .corner { padding: 3px 0 0; }
  .tabsel { width: 25px; height: 24px; display: flex; align-items: center; justify-content: center; border: 1px solid #868c94; background: #f7f7f7; box-shadow: inset 0 0 0 4px #cdd0d5, inset 0 0 0 5px #868c94; }
  .hrow { display: flex; justify-content: center; gap: 16px; background: linear-gradient(#b4b8bd, #cdd0d5 3px); overflow: hidden; }
  .page-slot { width: 794px; flex: none; }
  .ruler-slot { width: 795px; flex: none; }
  .rtoggle { display: flex; flex-direction: column; align-items: center; gap: 2px; padding-top: 5px; }
  .rtoggle i { width: 9px; height: 2px; background: #70757c; }
  .rtoggle button { width: 16px; height: 17px; border: 1px solid #868c94; display: flex; align-items: center; justify-content: center; }
  .vcol { overflow: hidden; padding: 76px 0 0 5px; background: linear-gradient(#cdd0d5, #c5c9ce); }
  .canvas { display: flex; justify-content: center; gap: 17px; overflow: hidden; background: linear-gradient(#cdd0d5, #b6b9be); }
  .column { width: 794px; flex: none; display: flex; flex-direction: column; gap: 14px; }
  .column.right { gap: 2px; background: #939aa4; box-shadow: 0 0 9px 1px rgba(50, 58, 66, .6); }
  .page { background: #fff; padding: 0 57px 0 94px; font: 16px/18px "Liberation Serif", "Times New Roman", serif; color: #000; box-shadow: 0 0 9px 1px rgba(50, 58, 66, .6); }
  .right .page { box-shadow: none; }
  .stub { height: 74px; flex: none; padding-top: 6px; }
  .blank { height: 75px; flex: none; }
  .first, .second { flex: 1 0 auto; padding-top: 5px; }
  h1 { font-size: 24px; line-height: 28px; margin: 0 0 18px; white-space: nowrap; }
  h2 { font-size: 18px; line-height: 21px; margin: 0 0 18px; }
  .second h2 { margin-bottom: 19px; }
  h3 { font-size: 16px; line-height: 18px; margin: 0 0 20px; }
  p { margin: 0 0 20px; }
  hr { height: 2px; border: 0; margin: 0 0 22px; background: linear-gradient(#a0a0a0 50%, #e3e3e3 50%); }
  ol, ul { list-style: none; margin: 0 0 33px; padding: 0; counter-reset: n; }
  ul { margin-bottom: 19px; }
  ul.before-rule { margin-bottom: 32px; }
  ul.inner { margin: 0; }
  li { padding-left: 48px; }
  ol > li { counter-increment: n; }
  li::before { display: inline-block; width: 24px; margin-left: -24px; }
  ol > li::before { content: counter(n) "."; }
  ul > li::before { content: "•"; font-size: 20px; line-height: 20px; height: 16px; vertical-align: top; }
  ul.inner > li::before { content: "o"; font: 13px/20px "Liberation Mono", monospace; height: 18px; }
  .tasks li:first-child { line-height: 19px; }
  u { text-decoration: underline wavy #ff2a2a 1px; text-decoration-skip-ink: none; text-underline-offset: 1px; }
  table { border-collapse: collapse; margin-bottom: 16px; }
  th, td { padding: 0; height: 22px; text-align: left; white-space: nowrap; }
  th { height: 24px; text-align: center; }
  .wide { width: 311px; }
  .yes { width: 62px; }

  .vscroll { display: flex; flex-direction: column; align-items: center; background: linear-gradient(90deg, #d3d8de, #dde1ea); padding-right: 1px; }
  .vscroll > button { height: 14px; display: flex; align-items: center; }
  .above { flex: 286; }
  .thumb { flex: 256; width: 16px; border: 1px solid #868e99; background: linear-gradient(90deg, #f3f5f9, #d8dce3); display: flex; align-items: center; justify-content: center; border-radius: 1px; }
  .below { flex: 225; }
  .browse { height: 52px; width: 17px; flex: none; border-top: 1px solid #b4b9c2; display: flex; flex-direction: column; align-items: center; gap: 11px; padding-top: 4px; }

  .status { height: 22px; flex: none; display: flex; align-items: center; border-top: 1px solid #868e99; background: linear-gradient(#f4f5f7, #dcdfe4 15%, #b9bcc2); padding-right: 4px; color: #333; white-space: nowrap; }
  .status > button { height: 19px; padding: 0 9px 0 8px; border-right: 1px solid #8d9299; }
  .status .lang { display: flex; align-items: center; gap: 16px; }
  .views { display: flex; align-items: center; border-left: 1px solid #8d9299; padding-left: 4px; height: 19px; }
  .views button { width: 18px; height: 19px; display: flex; align-items: center; justify-content: center; border: 1px solid transparent; border-radius: 2px; }
  .views .on { background: linear-gradient(#fde08a, #fbd15b 45%, #fdf08a); border-color: #c29a3f; }
  .status .pct { border: 0; padding: 0 8px 0 12px; }
  .status .round { border: 0; padding: 0; height: 16px; }
  .zoom { appearance: none; width: 100px; margin: 0; height: 16px; background: linear-gradient(#8b98ad, #8b98ad) center / 100% 1px no-repeat; }
  .zoom::-webkit-slider-thumb { appearance: none; width: 9px; height: 13px; background: #f4f5f7; border: 1px solid #6f757d; border-radius: 1px 1px 5px 5px; }

  .taskbar { height: 48px; flex: none; display: flex; align-items: center; padding: 0 20px; background: linear-gradient(90deg, #d9eee2, #cdf0ee 22%, #c9f0f1 50%, #cdf0f3); color: #1c1c1c; }
  .start { display: flex; margin-right: 13px; }
  .search { width: 219px; height: 31px; display: flex; align-items: center; gap: 9px; padding: 0 6px 0 12px; border: 1px solid #b9dcd8; border-radius: 16px; background: #f1faf8; margin-right: 3px; }
  .search input { flex: 1; min-width: 0; border: 0; padding: 0; background: none; font: 13px/20px "Noto Sans", sans-serif; color: #555; outline: none; }
  .search input::placeholder { color: #5c6362; opacity: 1; }
  .task { width: 44px; height: 40px; display: flex; align-items: center; justify-content: center; position: relative; }
  .task.current { width: 36px; margin: 0 4px; border-radius: 4px; background: #e6f8f7; border: 1px solid #d5eeed; box-shadow: 2px 0 0 #dbf4f3; }
  .dot, .pill { position: absolute; bottom: 1px; left: 50%; width: 6px; height: 3px; margin-left: -3px; border-radius: 2px; background: #7d8c8c; }
  .pill { width: 16px; margin-left: -8px; background: #22808f; bottom: 0; }
  .tray { width: 32px; height: 40px; display: flex; align-items: center; justify-content: center; }
  .kbd { width: 44px; height: 40px; }
  .net { display: flex; align-items: center; gap: 8px; padding: 0 15px 0 7px; height: 40px; }
  .clock { display: flex; flex-direction: column; align-items: flex-end; min-width: 56px; }
</style>
